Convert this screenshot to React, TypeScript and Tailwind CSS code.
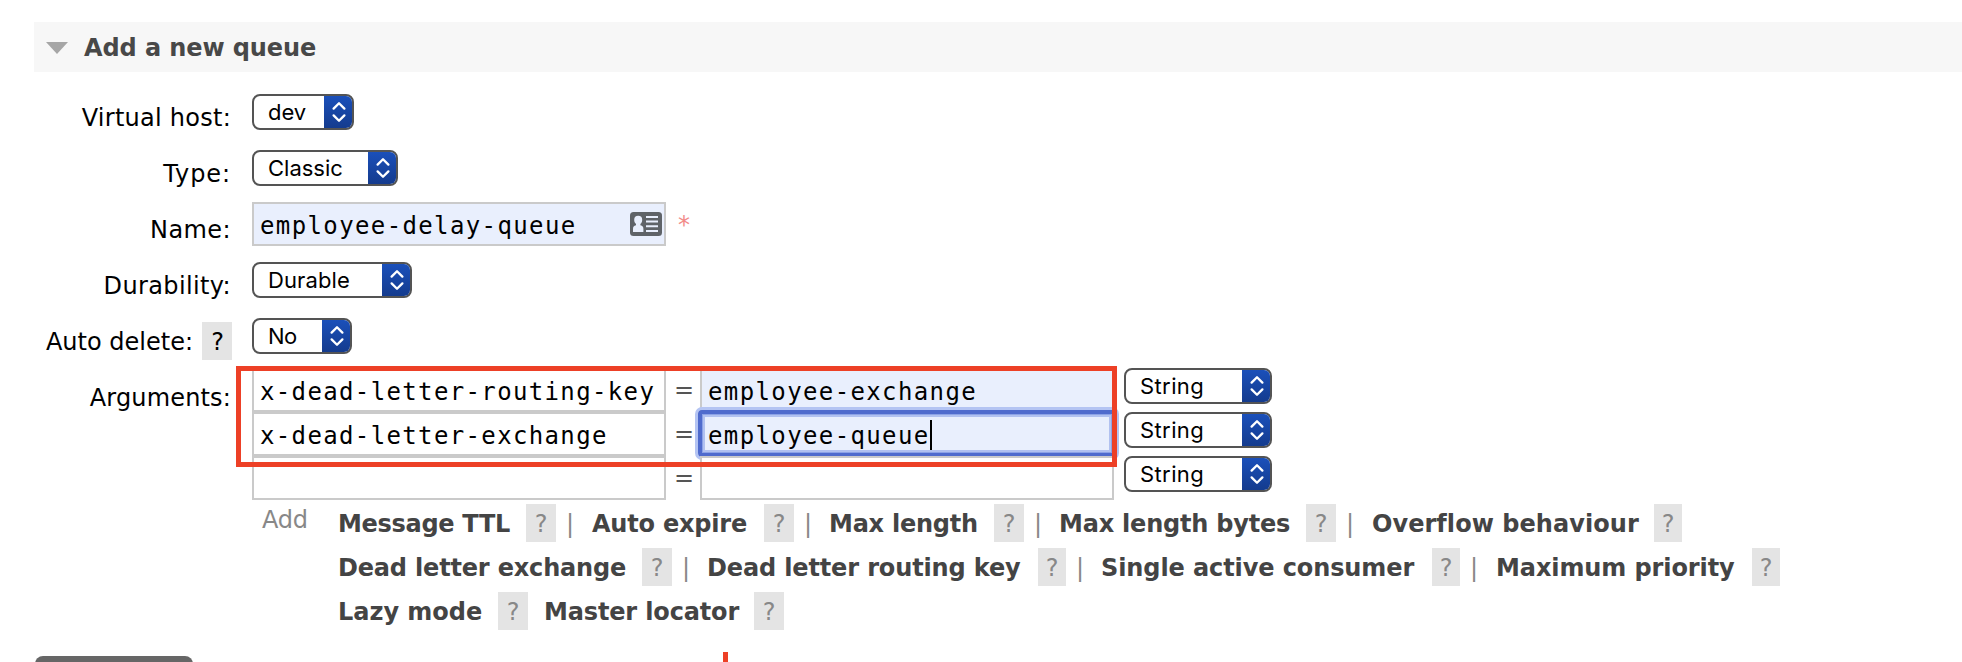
import React from "react";

const SANS = "font-['DejaVu_Sans','Verdana',sans-serif]";
const MONO = "font-['DejaVu_Sans_Mono',monospace]";

function Select({ label, className }: { label: string; className: string }) {
  return (
    <div
      className={`relative flex h-9 shrink-0 items-center overflow-hidden rounded-[8px] border-2 border-[#545454] bg-white pl-[14px] font-['Inter',sans-serif] text-[22px] leading-9 text-black ${className}`}
    >
      {label}
      <span className="absolute -top-0.5 -right-0.5 flex h-9 w-[30px] items-center justify-center rounded-r-[8px] bg-linear-to-b from-[#1b51bd] to-[#143a8b]">
        <svg width="16" height="22" viewBox="0 0 16 22" fill="none" stroke="white" strokeWidth="2.3" strokeLinecap="round" strokeLinejoin="round">
          <path d="M2.6 7.6 8 2.2l5.400 5.400M2.600 14.400 8 19.800l5.400-5.400" />
        </svg>
      </span>
    </div>
  );
}

function Field({ value, className = "" }: { value: string; className?: string }) {
  return (
    <div
      className={`flex h-11 w-[414px] shrink-0 items-center border-2 border-[#cacaca] pt-1 pl-[6px] text-2xl leading-10 whitespace-pre text-black ${MONO} ${className}`}
    >
      {value}
    </div>
  );
}

function Row({ label, spacing = "", help = false, className = "h-14", children }: {
  label: string;
  spacing?: string;
  help?: boolean;
  className?: string;
  children: React.ReactNode;
}) {
  return (
    <div className={`flex ${className}`}>
      <div className={`mr-5 flex w-[232px] shrink-0 justify-end pt-[14px] leading-10 whitespace-nowrap ${help ? "" : "pr-px"}`}>
        <span className={spacing}>{label}</span>
        {help ? <span className="ml-[9px] h-[38px] w-[30px] bg-[#e4e4e4] pl-px text-center">?</span> : null}
      </div>
      {children}
    </div>
  );
}

function Hint({ text, textWidth, width, spacing, box = "w-[29px]", bar = true }: {
  text: string;
  textWidth: string;
  width: string;
  spacing: string;
  box?: string;
  bar?: boolean;
}) {
  return (
    <div className={`flex h-[38px] shrink-0 leading-10 whitespace-nowrap ${width}`}>
      <span className={`shrink-0 pl-px font-bold text-[#444] ${textWidth} ${spacing}`}>{text}</span>
      <span className={`shrink-0 bg-[#e4e4e4] text-center ${box}`}>?</span>
      {bar ? <span className="ml-[10px]">|</span> : null}
    </div>
  );
}

function ContactCard() {
  return (
    <svg className="absolute top-2.5 right-1" width="32" height="24" viewBox="0 0 32 24">
      <rect width="32" height="24" rx="3.500" fill="#5f6368" />
      <g fill="#e9effd">
        <ellipse cx="8.200" cy="8" rx="4" ry="4.200" />
        <path d="M6 11h4.400v2.200c2.200.5 3 1.600 3 3.800v3H3v-3c0-2.200.8-3.300 3-3.800z" />
        <path d="M16 4h12v2H16zM16 8.500h12v2H16zM16 13.300h12v2H16zM16 18h12v2H16z" />
      </g>
    </svg>
  );
}

export default function App() {
  return (
    <div className={`relative h-[662px] w-[1962px] overflow-hidden bg-white pt-[22px] text-2xl text-black ${SANS}`}>
      <div className="ml-[34px] flex h-[50px] items-center bg-[#f7f7f7] pl-3">
        <svg width="22" height="12" viewBox="0 0 22 12" className="mt-0.5">
          <path d="M0 0h22L11 12z" fill="#a6a6a6" />
        </svg>
        <h2 className="ml-4 pt-px text-2xl leading-[50px] font-bold tracking-[-0.1px] text-[#484848]">Add a new queue</h2>
      </div>

      <div className="pt-3">
        <Row label="Virtual host:" spacing="tracking-[0.26px]">
          <Select label="dev" className="mt-[10px] w-[102px]" />
        </Row>
        <Row label="Type:" spacing="tracking-[0.9px]">
          <Select label="Classic" className="mt-[10px] w-[146px]" />
        </Row>
        <Row label="Name:" spacing="tracking-[0.4px]">
          <div className="relative mt-[6px] h-11">
            <Field value="employee-delay-queue" className="bg-[#e9effd] tracking-[1.38px]" />
            <ContactCard />
          </div>
          <span className="mt-[6px] ml-3 pt-px leading-[44px] text-[#f28b88]">*</span>
        </Row>
        <Row label="Durability:" spacing="tracking-[0.36px]">
          <Select label="Durable" className="mt-[10px] w-[160px] tracking-[0.1px]" />
        </Row>
        <Row label="Auto delete:" spacing="tracking-[0px]" help>
          <Select label="No" className="mt-[10px] w-[100px] tracking-[-0.5px]" />
        </Row>
        <Row label="Arguments:" spacing="tracking-[0.16px]" className="h-[136px]">
          <div className="flex flex-col pt-1">
            {[
              ["x-dead-letter-routing-key", "employee-exchange"],
              ["x-dead-letter-exchange", "employee-queue"],
              ["", ""],
            ].map(([key, value], i) => (
              <div key={i} className="flex h-11">
                <Field value={key} className="tracking-[1.36px]" />
                <span className="w-[34px] shrink-0 pl-2 leading-[44px] text-[#555]">=</span>
                <div className={`relative ${i === 2 ? "z-10" : ""}`}>
                  <Field value={value} className={`tracking-[1.38px] ${i < 2 ? "bg-[#e9effd]" : ""}`} />
                  {i === 1 ? (
                    <>
                      <span className="absolute -inset-x-0.5 -top-[2px] -bottom-[1px] rounded-[4px] border-4 border-[#4f6bcd] shadow-[0_0_0_3px_#b4c4f3,inset_0_0_0_1px_#8ca2e6,inset_0_0_0_3px_#b1c1f0]" />
                      <span className="absolute top-2 left-[230px] h-[30px] w-0.5 bg-black" />
                    </>
                  ) : null}
                  {i === 2 ? <span className="absolute inset-0.5 -z-10 bg-white" /> : null}
                </div>
                <Select label="String" className="ml-[10px] w-[148px] tracking-[0.4px]" />
              </div>
            ))}
          </div>
        </Row>
      </div>

      <div className="flex pt-1 text-[#888]">
        <span className="-mt-1 ml-[262px] w-[75px] shrink-0 leading-10 tracking-[-0.3px]">Add</span>
        <div className="flex flex-col gap-[6px]">
          <div className="flex">
            <Hint text="Message TTL" textWidth="w-[189px]" width="w-[254px]" box="w-[30px]" spacing="tracking-[-0.3px]" />
            <Hint text="Auto expire" textWidth="w-[173px]" width="w-[237px]" box="w-[30px]" spacing="tracking-[-0.2px]" />
            <Hint text="Max length" textWidth="w-[166px]" width="w-[230px]" box="w-[30px]" spacing="tracking-[-0.24px]" />
            <Hint text="Max length bytes" textWidth="w-[248px]" width="w-[313px]" box="w-[30px]" spacing="tracking-[-0.21px]" />
            <Hint text="Overflow behaviour" textWidth="w-[283px]" width="w-[312px]" box="w-[28px]" spacing="tracking-[0.05px]" bar={false} />
          </div>
          <div className="flex">
            <Hint text="Dead letter exchange" textWidth="w-[305px]" width="w-[369px]" box="w-[30px]" spacing="tracking-[-0.18px]" />
            <Hint text="Dead letter routing key" textWidth="w-[332px]" width="w-[394px]" box="w-[28px]" spacing="tracking-[-0.14px]" />
            <Hint text="Single active consumer" textWidth="w-[332px]" width="w-[395px]" box="w-[28px]" spacing="tracking-[-0.1px]" />
            <Hint text="Maximum priority" textWidth="w-[257px]" width="w-[290px]" box="w-[28px]" spacing="tracking-[-0.1px]" bar={false} />
          </div>
          <div className="flex">
            <Hint text="Lazy mode" textWidth="w-[161px]" width="w-[206px]" box="w-[30px]" spacing="tracking-[-0.02px]" bar={false} />
            <Hint text="Master locator" textWidth="w-[211px]" width="w-[250px]" box="w-[30px]" spacing="tracking-[-0.15px]" bar={false} />
          </div>
        </div>
      </div>

      <div className="mt-[26px] ml-[35px] h-10 w-[158px] rounded-[8px] bg-[#666]" />

      <div className="absolute top-[366px] left-[236px] z-20 h-[101px] w-[881px] border-[5px] border-[#ed4026]" />
      <div className="absolute top-[652px] left-[723px] h-[10px] w-[5px] bg-[#ed4026]" />
    </div>
  );
}
